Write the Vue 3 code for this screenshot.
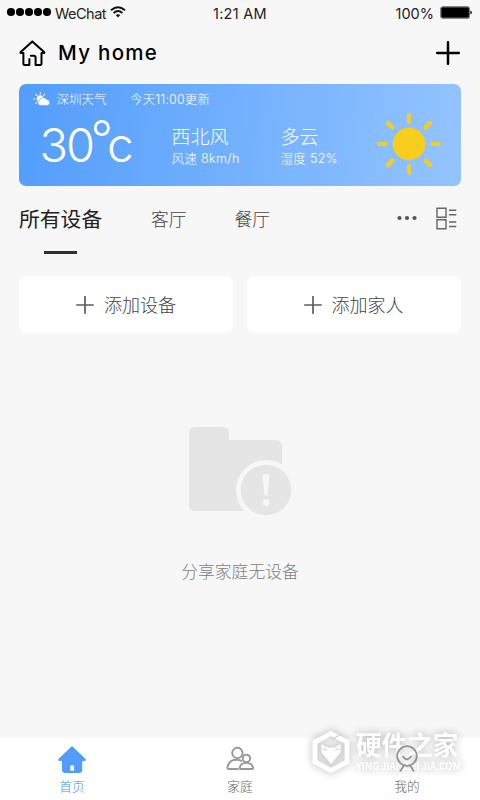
<script setup>
const tabs = ['客厅', '餐厅']
const actions = ['添加设备', '添加家人']
const rays = [0, 45, 90, 135, 180, 225, 270, 315]
</script>

<template>
  <div class="screen">
    <header class="status">
      <div class="signal"><i v-for="n in 5" :key="n"></i></div>
      <span class="carrier">WeChat</span>
      <svg class="wifi" width="16" height="12" viewBox="0 0 16 12">
        <g fill="none" stroke="#111" stroke-width="1.9">
          <path d="M1 4.3Q8-1.9 15 4.3" />
          <path d="M3.6 7Q8 3.2 12.4 7" />
        </g>
        <path d="M5.7 9.1Q8 7.3 10.3 9.1L8 11.5Z" fill="#111" />
      </svg>
      <span class="time">1:21 AM</span>
      <span class="percent">100%</span>
      <svg class="battery" width="32" height="13" viewBox="0 0 32 13">
        <rect x=".8" y=".8" width="28.6" height="11.4" rx="2" fill="#000" stroke="#777" stroke-width="1.2" />
        <path d="M30.3 4.4Q32 5 32 6.5T30.3 8.6Z" fill="#222" />
      </svg>
    </header>

    <div class="title">
      <svg width="28" height="27" viewBox="0 0 28 27">
        <path d="M12.8 15.8H15.6Q17.6 15.8 17.6 17.8V24.9H22Q23.5 24.9 23.5 23.4V13.1H25.6Q26.8 13.1 26.1 12L14.3 1.4L2.7 12Q2 13.1 3.2 13.1H5.4V23.4Q5.4 24.9 6.9 24.9H11.4V19" fill="none" stroke="#000" stroke-width="2" stroke-linejoin="round" stroke-linecap="round" />
      </svg>
      <h1>My home</h1>
      <svg class="plus" width="24" height="24" viewBox="0 0 24 24">
        <path d="M12 1.2V22.8M1.2 12H22.8" stroke="#000" stroke-width="2.5" stroke-linecap="round" />
      </svg>
    </div>

    <section class="weather">
      <div class="weather-top">
        <svg width="18" height="14" viewBox="0 0 18 14">
          <g stroke="#fff" stroke-width="1.1" stroke-linecap="round">
            <path d="M7.3.6V1.8M2.8 2.4L3.7 3.3M11.7 2.4L10.9 3.2M.7 7H2M2.8 11.2L3.7 10.4" />
          </g>
          <circle cx="7.2" cy="6.7" r="3.5" fill="#fff" />
          <path d="M7 13.4A2.7 2.7 0 0 1 6.6 8.2A3.7 3.7 0 0 1 13.5 7.5A3 3 0 0 1 14.5 13.4Z" fill="#fff" stroke="#5da3ff" stroke-width=".7" />
        </svg>
        <span class="city">深圳天气</span>
        <span class="updated">今天11:00更新</span>
      </div>
      <div class="weather-main">
        <div class="temp"><span class="digits">30</span><span class="degree">°</span><span class="unit">c</span></div>
        <div class="info wind"><strong>西北风</strong><span>风速 8km/h</span></div>
        <div class="info sky"><strong>多云</strong><span>湿度 52%</span></div>
        <svg class="sun" width="66" height="64" viewBox="-33 -32 66 64">
          <circle r="16.4" fill="#f7ce1d" />
          <path v-for="r in rays" :key="r" :d="r % 180 ? 'M0-29.7V-23.4' : 'M0-28.6V-22.4'" :transform="`rotate(${r})`" stroke="#f7ce1d" stroke-width="4.2" stroke-linecap="round" />
        </svg>
      </div>
    </section>

    <nav class="tabs">
      <span class="tab active">所有设备</span>
      <span v-for="tab in tabs" :key="tab" class="tab">{{ tab }}</span>
      <svg class="dots" width="20" height="6" viewBox="0 0 20 6" fill="#555">
        <circle cx="2.5" cy="3" r="2.1" /><circle cx="10" cy="3" r="2.1" /><circle cx="17.5" cy="3" r="2.1" />
      </svg>
      <svg class="list" width="21" height="23" viewBox="0 0 21 23" fill="none" stroke="#666" stroke-width="1.4">
        <path d="M1 1.2H10V10.2H1ZM1 12.8H10V21.8H1ZM13 3.3H20.3M13 7.8H20.3M13 15H20.3M13 19.5H20.3" />
      </svg>
    </nav>

    <div class="actions">
      <button v-for="a in actions" :key="a">
        <svg width="18" height="18" viewBox="0 0 18 18">
          <path d="M9 .8V17.2M.8 9H17.2" stroke="#5c5c5c" stroke-width="1.7" stroke-linecap="round" />
        </svg>
        <span>{{ a }}</span>
      </button>
    </div>

    <main class="empty">
      <svg width="104" height="90" viewBox="0 0 104 90">
        <path d="M6 0H34Q40 0 40 6V13H87Q93 13 93 19V84H6Q0 84 0 78V6Q0 0 6 0Z" fill="#e5e5e5" />
        <circle cx="77" cy="63" r="30" fill="#f7f7f7" />
        <circle cx="77" cy="63" r="25.3" fill="#e5e5e5" />
        <path d="M73.6 49.5Q73.6 46.8 77 46.8T80.4 49.5L78.8 67Q78.5 68.7 77 68.7T75.2 67Z" fill="#f7f7f7" />
        <circle cx="77" cy="75.5" r="3.4" fill="#f7f7f7" />
      </svg>
      <p>分享家庭无设备</p>
    </main>

    <footer class="tabbar">
      <a class="on">
        <svg width="30" height="30" viewBox="0 0 30 30">
          <path d="M15 1L1.4 14Q.8 16 2.8 16H5V25.5Q5 27.9 7.4 27.9H22.8Q25.2 27.9 25.2 25.5V16H27.4Q29.4 16 28.6 14Z" fill="#529dfc" />
          <rect x="13.3" y="20.2" width="3.8" height="5.5" rx=".8" fill="#fff" />
        </svg>
        <span>首页</span>
      </a>
      <a>
        <svg width="30" height="30" viewBox="0 0 30 30" fill="none" stroke="#999" stroke-width="1.9">
          <circle cx="12.4" cy="8" r="5.2" />
          <path d="M13.5 24H4Q2.1 24 2.5 22Q4 14.8 11.5 14.8Q15 14.8 17 16.3" />
          <circle cx="21.4" cy="13.4" r="3.7" />
          <path d="M15.4 24Q14.6 24 14.8 22.5Q15.8 17.9 21.3 17.9T28 22.5Q28.2 24 27.3 24Z" />
        </svg>
        <span>家庭</span>
      </a>
      <a class="me">
        <svg width="30" height="30" viewBox="0 0 30 30" fill="none" stroke="#939393" stroke-width="1.8">
          <circle cx="15" cy="11" r="9.8" />
          <path d="M10.6 11Q15 17.5 19.4 11M11.8 20.5L8 26.5M18.2 20.5L22 26.5" />
        </svg>
        <span>我的</span>
      </a>
    </footer>

    <div class="watermark">
      <svg width="40" height="44" viewBox="0 0 40 44">
        <path d="M20 3.5L36 12.2V31.8L20 40.5L4 31.8V12.2Z" fill="none" stroke="#fff" stroke-width="4.8" />
        <path d="M22 9L28.5 5.2" stroke="#bbb" stroke-width="1" />
        <path d="M10.3 14.2L16.5 17.6H23.5L29.7 14.2V22L20 34L10.3 22Z" fill="#fff" />
        <path d="M11.5 18.8L16 19.8M28.5 18.8L24 19.8" stroke="#bbb" stroke-width=".8" />
      </svg>
      <div class="mark-text"><b>硬件之家</b><span>YING JIANZHI JIA.COM</span></div>
    </div>
  </div>
</template>

<style>
body { background: #f7f7f7; }
</style>

<style scoped>
.screen {
  position: relative;
  width: 480px;
  height: 800px;
  overflow: hidden;
  display: flex;
  flex-direction: column;
  background: #f7f7f7;
  color: #5f5f5f;
  font-family: Inter, "Noto Sans CJK SC", sans-serif;
  white-space: nowrap;
}
.status {
  display: flex;
  align-items: center;
  height: 26px;
  padding: 0 8px 0 7px;
  font-size: 14.5px;
  color: #222;
}
.signal { display: flex; gap: 1.5px; width: 48px; margin-top: -2px; }
.signal i { width: 7.5px; height: 7.5px; border-radius: 50%; background: #000; }
.carrier { width: 55px; letter-spacing: -.5px; }
.wifi { margin-top: -2px; }
.time { margin-left: 87px; width: 70px; letter-spacing: .25px; }
.percent { margin-left: auto; }
.battery { margin: -2px 0 0 6px; }
.title { display: flex; align-items: center; height: 54px; padding: 0 20px 0 18px; }
.title h1 { margin: -1px 0 0 12px; font-size: 20.5px; font-weight: 500; letter-spacing: 1.3px; color: #000; }
.plus { margin-left: auto; }
.weather {
  box-sizing: border-box;
  height: 102px;
  margin: 4px 19.5px 0 19px;
  border-radius: 7px;
  background: linear-gradient(97deg, #529dfc, #94c4ff);
  color: #fff;
}
.weather-top { display: flex; align-items: center; height: 30px; padding-left: 13.5px; font-size: 12.5px; font-weight: 300; }
.weather-top span { margin-top: -1px; }
.weather-top .city { margin-left: 6px; width: 73.5px; }
.updated { letter-spacing: .15px; }
.weather-main { display: flex; height: 72px; }
.temp { display: flex; width: 152.5px; padding-left: 20.5px; box-sizing: border-box; font-size: 47px; font-weight: 300; line-height: 62px; }
.digits { width: 51px; letter-spacing: -2px; }
.degree { width: 16.5px; font-size: 50px; line-height: 51px; font-weight: 300; }
.unit { font-size: 48px; }
.info { display: flex; flex-direction: column; padding-top: 11px; font-size: 12.6px; font-weight: 300; line-height: 18px; }
.info strong { font-size: 19px; line-height: 26px; font-weight: 300; }
.info span { margin-top: -1px; letter-spacing: .28px; }
.wind { width: 109px; }
.sky { width: 76px; }
.sun { margin: -2.5px 0 0 19.5px; }
.tabs { position: relative; display: flex; align-items: center; height: 66px; margin: 0 23px 0 19px; }
.tab { width: 83.5px; margin-top: -2px; font-size: 17.8px; font-weight: 300; color: #444; }
.active {
  width: 132px;
  font-size: 20.8px;
  font-weight: 400;
  color: #222;
}
.active::after { content: ""; position: absolute; left: 25px; top: 65px; width: 33px; height: 3px; background: #303030; }
.dots { margin: -2px 0 0 auto; }
.list { margin: -2px 0 0 19px; }
.actions { display: flex; gap: 13.5px; margin: 24px 19.5px 0 19px; }
.actions button {
  flex: 1;
  display: flex;
  align-items: center;
  justify-content: center;
  gap: 10px;
  height: 57px;
  padding: 0;
  border: 0;
  border-radius: 7px;
  background: #fff;
  color: #444;
  font: 300 18px "Noto Sans CJK SC", sans-serif;
}
.actions span { margin-top: -1px; }
.empty { display: flex; flex-direction: column; align-items: center; flex: 1; padding-top: 94px; }
.empty svg { margin-left: 2px; }
.empty p { margin: 43px 0 0; font-size: 16.8px; font-weight: 300; line-height: 24px; color: #808080; }
.tabbar { display: flex; height: 62px; background: #fff; }
.tabbar a { width: 144px; display: flex; flex-direction: column; align-items: center; padding-top: 7px; font-size: 12.7px; font-weight: 300; line-height: 20px; color: #666; }
.tabbar a + a { margin-left: 24px; }
.tabbar .on { color: #388ffb; }
.tabbar a.me { width: 142px; }
.me svg { position: relative; z-index: 2; }
.tabbar span { margin-top: 2px; }
.watermark { position: absolute; z-index: 1; left: 311px; top: 730px; display: flex; color: #fff; filter: drop-shadow(0 0 4px rgba(0, 0, 0, .36)); opacity: .88; }
.mark-text { display: flex; flex-direction: column; margin: 0 0 0 5px; }
.mark-text b { font-size: 25.6px; line-height: 34px; font-weight: 700; margin-top: -1px; }
.mark-text span { margin-top: -3px; font: 700 10px/12px "Noto Sans CJK SC", sans-serif; letter-spacing: -.22px; }
</style>
